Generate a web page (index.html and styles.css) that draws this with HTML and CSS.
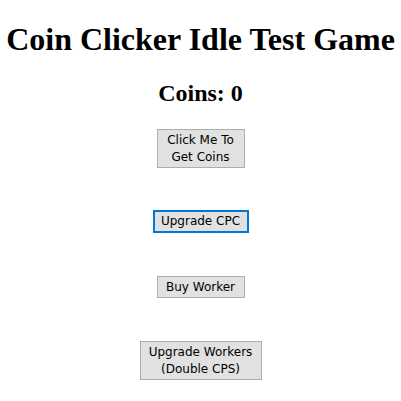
FILE: index.html
```html
<!DOCTYPE html>
<html>
<head>
<meta charset="utf-8">
<title>Coin Clicker Idle Test Game</title>
<link rel="stylesheet" href="styles.css">
</head>
<body>
<h1 class="title">Coin Clicker Idle Test Game</h1>
<h2 class="coins">Coins: 0</h2>
<div class="controls">
  <button class="btn btn-click">Click Me To<br>Get Coins</button>
  <button class="btn btn-cpc">Upgrade CPC</button>
  <button class="btn btn-worker">Buy Worker</button>
  <button class="btn btn-double">Upgrade Workers<br>(Double CPS)</button>
</div>
</body>
</html>
```
FILE: styles.css
```css
html, body {
  background: #ffffff;
}
body {
  margin: 0;
  padding: 0;
  font-family: "Liberation Serif", "Times New Roman", serif;
  color: #000000;
}
.title {
  font-size: 32px;
  font-weight: bold;
  text-align: center;
  white-space: nowrap;
  margin: 0 0 21px;
  padding-top: 21px;
  line-height: 37px;
}
.coins {
  font-size: 24px;
  font-weight: bold;
  text-align: center;
  margin: 0 0 22px;
  line-height: 28px;
}
.controls {
  display: flex;
  flex-direction: column;
  align-items: center;
}
.btn {
  box-sizing: border-box;
  font-family: "DejaVu Sans", Tahoma, sans-serif;
  font-size: 12px;
  line-height: 17px;
  color: #000000;
  background: #e1e1e1;
  border: 1px solid #adadad;
  border-radius: 0;
  padding: 0;
  margin: 0;
  text-align: center;
}
.btn-click {
  width: 88px;
  height: 39px;
}
.btn-cpc {
  width: 96px;
  height: 23px;
  border: 2px solid #0078d7;
  margin-top: 42px;
}
.btn-worker {
  width: 88px;
  height: 22px;
  margin-top: 43px;
}
.btn-double {
  width: 122px;
  height: 39px;
  margin-top: 43px;
}
```
